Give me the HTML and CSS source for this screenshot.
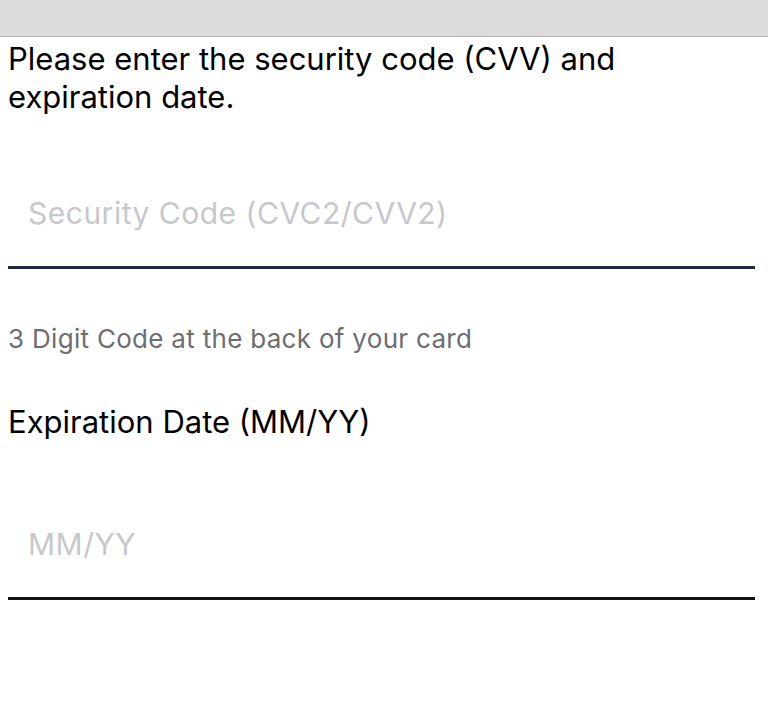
FILE: index.html
```html
<!DOCTYPE html>
<html lang="en">
<head>
  <meta charset="UTF-8">
  <meta name="viewport" content="width=device-width, initial-scale=1.0">
  <title>Card Verification</title>
  <link rel="stylesheet" href="styles.css">
</head>
<body>
<div class="top-bar"></div>
<div class="container">
  <p class="intro">Please enter the security code (CVV) and expiration date.</p>

  <div class="field field-cvv">
    <input type="text" class="field-input" placeholder="Security Code (CVC2/CVV2)">
  </div>
  <p class="hint">3 Digit Code at the back of your card</p>

  <p class="label">Expiration Date (MM/YY)</p>
  <div class="field field-expiry">
    <input type="text" class="field-input" placeholder="MM/YY">
  </div>
</div>
</body>
</html>
```

FILE: styles.css
```css
body {
  font-family: Inter, 'Noto Sans', sans-serif;
  background-color: white;
  margin: 0;
  color: #000;
}
.top-bar {
  height: 36px;
  background-color: #dcdcdc;
  border-bottom: 1px solid #b2b2b2;
}
.container {
  padding: 0 13px 0 8px;
}
.intro {
  margin: 0;
  padding-top: 3px;
  font-size: 31px;
  line-height: 38px;
}
.field {
  border-bottom: 3px solid #1f2a44;
}
.field-cvv {
  margin-top: 79px;
}
.field-expiry {
  margin-top: 86px;
  border-bottom-color: #111;
}
.field-input {
  display: block;
  width: 100%;
  box-sizing: border-box;
  border: none;
  outline: none;
  background: transparent;
  padding: 0 20px 35px;
  font-family: inherit;
  font-size: 30px;
  line-height: 36px;
  letter-spacing: 0.5px;
  color: #000;
}
.field-input::placeholder {
  color: #c7c7cc;
}
.hint {
  margin: 55px 0 0;
  font-size: 26px;
  line-height: 30px;
  letter-spacing: 0.3px;
  color: #6d6d72;
}
.label {
  margin: 50px 0 0;
  font-size: 31px;
  line-height: 36px;
}
```
